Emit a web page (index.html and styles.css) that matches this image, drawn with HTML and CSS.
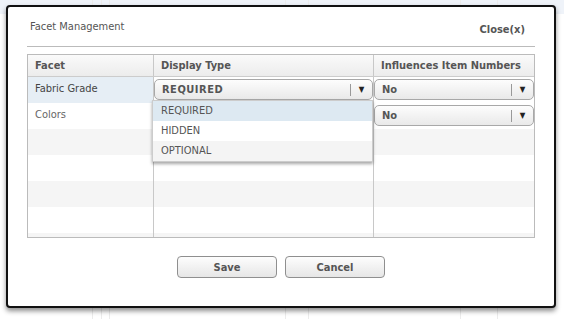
FILE: index.html
```html
<!DOCTYPE html>
<html lang="en">
<head>
    <meta charset="UTF-8">
    <title>Facet Management</title>
    <link rel="stylesheet" href="styles.css">
</head>
<body>
    <!-- page behind the dialog -->
    <div class="backdrop">
        <div class="bd-top"></div>
        <div class="bd-line" style="left:92px"></div>
        <div class="bd-line" style="left:101px"></div>
        <div class="bd-line" style="left:109px"></div>
        <div class="bd-line" style="left:285px"></div>
        <div class="bd-line" style="left:308px"></div>
        <div class="bd-line" style="left:460px"></div>
        <div class="bd-line" style="left:497px"></div>
    </div>

    <div class="modal">
        <div class="modal-head">
            <span class="modal-title">Facet Management</span>
            <a class="close-link">Close(x)</a>
        </div>

        <div class="grid">
            <div class="grid-row grid-head">
                <div class="cell">Facet</div>
                <div class="cell">Display Type</div>
                <div class="cell">Influences Item Numbers</div>
            </div>
            <div class="grid-body">
                <div class="grid-row">
                    <div class="cell cell-active">Fabric Grade</div>
                    <div class="cell cell-select">
                        <div class="select select-caps">REQUIRED<span class="select-arrow">&#9660;</span></div>
                    </div>
                    <div class="cell cell-select">
                        <div class="select">No<span class="select-arrow">&#9660;</span></div>
                    </div>
                </div>
                <div class="grid-row">
                    <div class="cell cell-muted">Colors</div>
                    <div class="cell"></div>
                    <div class="cell cell-select">
                        <div class="select">No<span class="select-arrow">&#9660;</span></div>
                    </div>
                </div>
                <div class="grid-row row-alt"><div class="cell"></div><div class="cell"></div><div class="cell"></div></div>
                <div class="grid-row"><div class="cell"></div><div class="cell"></div><div class="cell"></div></div>
                <div class="grid-row row-alt"><div class="cell"></div><div class="cell"></div><div class="cell"></div></div>
                <div class="grid-row"><div class="cell"></div><div class="cell"></div><div class="cell"></div></div>
                <div class="grid-row row-alt"><div class="cell"></div><div class="cell"></div><div class="cell"></div></div>
            </div>

            <ul class="dropdown">
                <li class="dropdown-item is-hover">REQUIRED</li>
                <li class="dropdown-item">HIDDEN</li>
                <li class="dropdown-item is-alt">OPTIONAL</li>
            </ul>
        </div>

        <div class="modal-actions">
            <button class="btn">Save</button>
            <button class="btn">Cancel</button>
        </div>
    </div>
</body>
</html>
```

FILE: styles.css
```css
html, body {
    margin: 0;
    width: 564px;
    height: 319px;
    overflow: hidden;
    background: #fff;
    font-family: "DejaVu Sans Condensed", "DejaVu Sans", sans-serif;
    font-size: 11px;
    color: #444;
}
.backdrop {
    position: absolute;
    inset: 0;
}
.bd-top {
    height: 14px;
    background: #eff3f9;
}
.bd-line {
    position: absolute;
    top: 0;
    bottom: 0;
    width: 1px;
    background: #ececec;
}

.modal {
    position: absolute;
    left: 6px;
    top: 5px;
    width: 546px;
    height: 299px;
    background: #fff;
    border: 2px solid #111;
    border-radius: 4px;
    box-shadow: 0 3px 5px rgba(0,0,0,0.45);
}
.modal-head {
    display: flex;
    justify-content: space-between;
    align-items: center;
    margin: 0 19px;
    height: 39px;
    padding-left: 3px;
    padding-right: 10px;
    border-bottom: 1px solid #bbb;
    color: #555;
}
.modal-title { padding-bottom: 1px; }
.close-link {
    font-weight: bold;
    padding-top: 5px;
    color: #555;
}

.grid {
    position: relative;
    margin: 7px 19px 0;
    border: 1px solid #bbb;
}
.grid-row {
    display: grid;
    grid-template-columns: 125px 220px 1fr;
    height: 26px;
}
.grid-head {
    box-sizing: border-box;
    height: 22px;
    background: linear-gradient(#fafafa, #ececec);
    border-bottom: 1px solid #ccc;
    font-weight: bold;
    color: #555;
}
.cell {
    display: flex;
    align-items: center;
    padding: 0 7px 3px;
    border-left: 1px solid #c8c8c8;
    overflow: hidden;
    white-space: nowrap;
}
.grid-head .cell { padding-bottom: 1px; }
.cell:first-child { border-left: none; }
.grid-body {
    height: 160px;
    overflow: hidden;
}
.row-alt { background: #f5f5f5; }
.cell-active { background: #e6eef5; }
.cell-muted { color: #666; }
.cell-select {
    padding: 0;
    align-items: flex-start;
}

.select {
    position: relative;
    box-sizing: border-box;
    width: 100%;
    height: 21px;
    margin-top: 2px;
    padding: 0 0 0 7px;
    display: flex;
    align-items: center;
    border: 1px solid #a8a8a8;
    border-radius: 5px;
    background: linear-gradient(#fdfdfd, #e9e9e9);
    font-weight: bold;
    color: #555;
}
.select-caps { letter-spacing: 0.5px; }
.select-arrow {
    position: absolute;
    right: 0;
    top: 4px;
    width: 21px;
    height: 12px;
    border-left: 1px solid #999;
    font-size: 8px;
    line-height: 12px;
    text-align: center;
    color: #222;
    letter-spacing: 0;
}

.dropdown {
    position: absolute;
    left: 124px;
    top: 45px;
    width: 219px;
    margin: 0;
    padding: 0;
    list-style: none;
    background: #fff;
    border: 1px solid #ccc;
    box-shadow: 0 2px 3px rgba(0,0,0,0.35);
    color: #555;
}
.dropdown-item {
    height: 20px;
    line-height: 20px;
    padding-left: 8px;
}
.dropdown-item.is-hover { background: #dde9f2; }
.dropdown-item.is-alt { background: #f4f4f4; }

.modal-actions {
    display: flex;
    justify-content: center;
    gap: 8px;
    margin-top: 18px;
}
.btn {
    width: 100px;
    height: 22px;
    padding: 0;
    border: 1px solid #8f8f8f;
    border-radius: 4px;
    background: linear-gradient(#fdfdfd, #e6e6e6);
    font-family: inherit;
    font-size: 11px;
    font-weight: bold;
    color: #555;
}
```
